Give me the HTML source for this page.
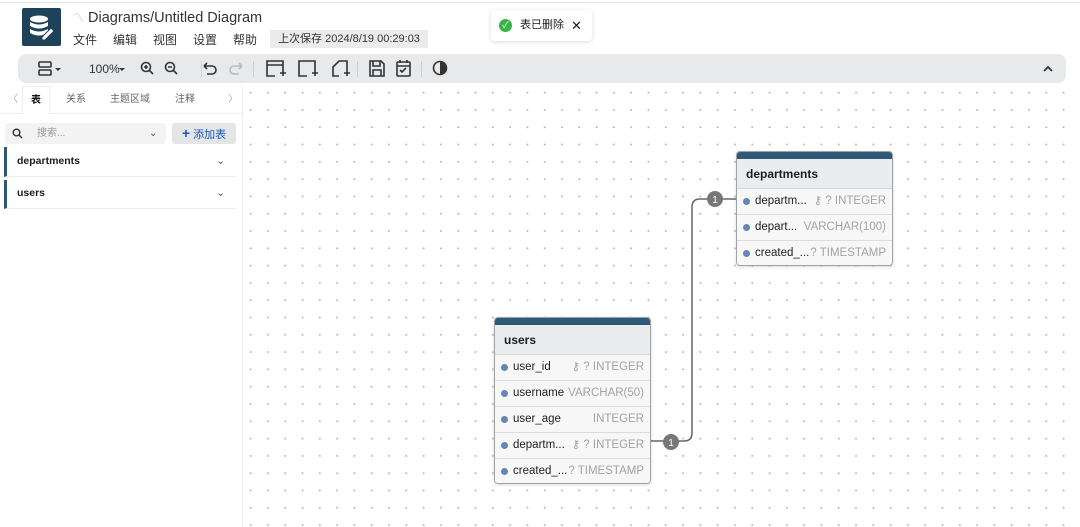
<!DOCTYPE html>
<html><head><meta charset="utf-8"><style>
*{margin:0;padding:0;box-sizing:border-box}
body{width:1080px;height:527px;overflow:hidden;background:#fff;font-family:"Liberation Sans","Noto Sans CJK SC",sans-serif;position:relative;color:#1d1d1f}
.abs{position:absolute}
.canvas{left:243px;top:84px;width:837px;height:443px;background-image:radial-gradient(circle,#b9b9b9 0.8px,transparent 1.2px);background-size:17.3px 17.3px;background-position:-1px 0px}
.tbl{position:absolute;background:#fff;border:1px solid #9ea3a8;border-radius:4px;box-shadow:0 1px 3px rgba(0,0,0,.15);overflow:hidden;font-size:11.5px}
.tbl .top{height:7px;background:#2e5a78}
.tbl .hd{height:30px;background:#ebecee;font-weight:bold;font-size:12px;line-height:30px;padding-left:9px;border-bottom:1px solid #d6d6d6}
.tbl .r{height:26px;line-height:25px;border-bottom:1px solid #dcdcdc;background:#f7f7f7;padding-left:18px;position:relative;color:#222}
.tbl .r:last-child{border-bottom:none}
.tbl .r:before{content:"";position:absolute;left:6px;top:9px;width:7px;height:7px;border-radius:50%;background:#6585b5}
.tbl .r span{position:absolute;right:6px;color:#a3a3a3}
.menu span{position:absolute;top:0}
.ic{stroke:#333;fill:none;stroke-width:1.6}
</style></head><body>
<div class="abs" style="left:0;top:0;width:1080px;height:3px;border-bottom:1px solid #e4e4e4"></div>
<div class="abs" style="left:22px;top:8px;width:39px;height:38px;background:#1e4259;border-radius:2px">
<svg width="39" height="38" viewBox="0 0 39 38"><g fill="#fff"><ellipse cx="17" cy="11" rx="9" ry="3.5"/><path d="M8 14q9 5 18 0v4q-9 5-18 0z"/><path d="M8 21q9 5 18 0v4q-9 5-18 0z"/></g><path d="M20 29l9-9 3 3-9 9h-3z" fill="#fff" stroke="#1e4259" stroke-width="1"/></svg></div>
<div class="abs" style="left:72px;top:9px;font-size:14.5px;color:#333"><span style="color:#bbb;font-size:12px">〽</span> Diagrams/Untitled Diagram</div>
<div class="abs menu" style="left:0;top:31px;font-size:12px;color:#333;height:16px;width:270px"><span style="left:73px">文件</span><span style="left:113px">编辑</span><span style="left:153px">视图</span><span style="left:193px">设置</span><span style="left:233px">帮助</span></div>
<div class="abs" style="left:270px;top:30px;width:158px;height:18px;background:#ebebeb;font-size:11px;line-height:18px;text-align:center;color:#333">上次保存 2024/8/19 00:29:03</div>
<div class="abs" style="left:491px;top:10px;width:101px;height:31px;background:#fff;border-radius:4px;box-shadow:0 1px 5px rgba(0,0,0,.15);font-size:11px;line-height:31px">
<span style="position:absolute;left:8px;top:9px;width:13px;height:13px;border-radius:50%;background:#3bb34a;color:#fff;font-size:9px;line-height:13px;text-align:center">✓</span>
<span style="position:absolute;left:29px">表已删除</span><span style="position:absolute;left:80px;font-size:13px">✕</span></div>
<div class="abs" style="left:18px;top:54px;width:1048px;height:29px;background:#e8e9eb;border-radius:8px"></div>
<svg class="abs" style="left:30px;top:58px" width="430" height="22">
<g class="ic"><rect x="9" y="4" width="12" height="5" rx="1"/><rect x="9" y="12" width="12" height="5" rx="1"/></g><path d="M25 10l3 3 3-3z" fill="#333"/>
<text x="59" y="15" font-size="12" fill="#333" font-family="Liberation Sans">100%</text><path d="M89 10l3 3 3-3z" fill="#333"/>
<g class="ic" stroke-width="2"><circle cx="116" cy="9" r="4.5"/><path d="M119 12l4 4M114 9h4M116 7v4"/><circle cx="140" cy="9" r="4.5"/><path d="M143 12l4 4M138 9h4"/></g>
<path class="ic" d="M174 8h8a4 4 0 010 8h-5M174 8l3-3M174 8l3 3"/>
<path d="M212 8h-8a4 4 0 000 8h5M212 8l-3-3M212 8l-3 3" stroke="#bbb" fill="none" stroke-width="1.6"/>
<g class="ic"><path d="M245 18h-8V3h16v9M237 7h16M250 15h6M253 12v6"/><path d="M277 18h-8V3h16v9M282 15h6M285 12v6"/><path d="M309 18h-6V9l6-6h8v9M314 15h6M317 12v6"/>
<path d="M340 3h11l3 3v12h-14zM343 3v5h7V3M343 18v-6h8v6"/><rect x="367" y="4" width="13" height="14" rx="1"/><path d="M367 8h13M370 2v3M377 2v3M370 12l2 2 4-4"/>
<circle cx="410" cy="10" r="6.5"/></g><path d="M410 3.5a6.5 6.5 0 010 13z" fill="#333"/>
</svg>
<div class="abs" style="left:201px;top:61px;width:1px;height:16px;background:#d0d0d0"></div>
<div class="abs" style="left:253px;top:61px;width:1px;height:16px;background:#d0d0d0"></div>
<div class="abs" style="left:357px;top:61px;width:1px;height:16px;background:#d0d0d0"></div>
<div class="abs" style="left:421px;top:61px;width:1px;height:16px;background:#d0d0d0"></div>
<svg class="abs" style="left:1042px;top:64px" width="12" height="10"><path d="M2 7l4-4 4 4" stroke="#333" stroke-width="1.8" fill="none"/></svg>
<div class="abs" style="left:0;top:86px;width:243px;height:441px;background:#fff;border-right:1px solid #eee"></div>
<div class="abs" style="left:0;top:86px;width:242px;height:28px;border-bottom:1px solid #eee;font-size:10px;color:#666;line-height:28px">
<span class="abs" style="left:8px;color:#aaa">〈</span>
<span class="abs" style="left:22px;width:28px;height:29px;background:#fff;border:1px solid #eee;border-bottom:none;text-align:center;color:#111;font-weight:bold">表</span>
<span class="abs" style="left:66px">关系</span><span class="abs" style="left:110px">主题区域</span><span class="abs" style="left:175px">注释</span><span class="abs" style="left:228px;color:#aaa">〉</span></div>
<div class="abs" style="left:5px;top:123px;width:161px;height:21px;background:#f3f3f3;border-radius:3px;font-size:10px;color:#999;line-height:21px">
<svg class="abs" style="left:7px;top:5px" width="11" height="11"><circle cx="4.5" cy="4.5" r="3.3" stroke="#333" stroke-width="1.4" fill="none"/><path d="M7 7l3 3" stroke="#333" stroke-width="1.4"/></svg>
<span class="abs" style="left:32px">搜索...</span><span class="abs" style="left:144px;color:#555">⌄</span></div>
<div class="abs" style="left:172px;top:123px;width:64px;height:21px;background:#e4e5e7;border-radius:3px;font-size:11px;color:#1a5cb5;line-height:21px;text-align:center"><b style="font-size:14px">+</b> 添加表</div>
<div class="abs" style="left:4px;top:147px;width:233px;height:30px;border-left:3px solid #2f5a6e;border-bottom:1px solid #eee;font-size:10.5px;font-weight:bold;line-height:28px;padding-left:10px">departments<span class="abs" style="right:12px;color:#555;font-weight:normal">⌄</span></div>
<div class="abs" style="left:4px;top:180px;width:233px;height:29px;border-left:3px solid #2f5a6e;border-bottom:1px solid #eee;font-size:10.5px;font-weight:bold;line-height:27px;padding-left:10px">users<span class="abs" style="right:12px;color:#555;font-weight:normal">⌄</span></div>
<div class="abs canvas"></div>
<svg class="abs" style="left:0;top:0" width="1080" height="527"><path d="M651 441h33q8 0 8-8V207q0-8 8-8h37" stroke="#666" stroke-width="1.5" fill="none"/>
<circle cx="671" cy="442" r="8" fill="#777"/><text x="671" y="446" font-size="10" fill="#fff" text-anchor="middle" font-family="Liberation Sans">1</text>
<circle cx="715" cy="199" r="8" fill="#777"/><text x="715" y="203" font-size="10" fill="#fff" text-anchor="middle" font-family="Liberation Sans">1</text></svg>
<div class="tbl" style="left:736px;top:151px;width:157px;height:115px"><div class="top"></div><div class="hd">departments</div>
<div class="r">departm...<span>⚷ ? INTEGER</span></div><div class="r">depart...<span>VARCHAR(100)</span></div><div class="r">created_...<span>? TIMESTAMP</span></div></div>
<div class="tbl" style="left:494px;top:317px;width:157px;height:167px"><div class="top"></div><div class="hd">users</div>
<div class="r">user_id<span>⚷ ? INTEGER</span></div><div class="r">username<span>VARCHAR(50)</span></div><div class="r">user_age<span>INTEGER</span></div><div class="r">departm...<span>⚷ ? INTEGER</span></div><div class="r">created_...<span>? TIMESTAMP</span></div></div>
</body></html>
